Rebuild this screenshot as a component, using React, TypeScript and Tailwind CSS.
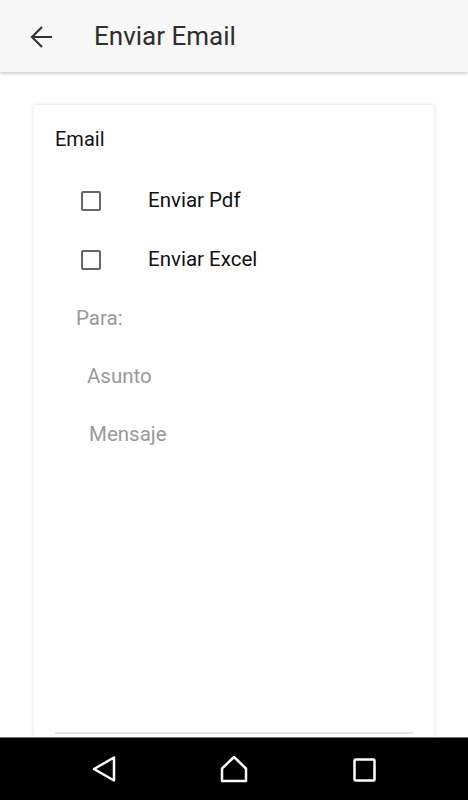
import React from "react"

function BackArrow() {
  return (
    <svg width="24" height="24" viewBox="0 0 24 24" className="text-[#333]">
      <path d="M22 12H3M12 2L2 12l10 10" fill="none" stroke="currentColor" strokeWidth="2.2" />
    </svg>
  )
}

function Check({ label }: { label: string }) {
  return (
    <div className="flex items-center h-[59px]">
      <div className="ml-[47px] w-[20px] h-[20px] border-2 border-[#666] rounded-[2px]" />
      <span className="ml-[47px] text-[20.5px] text-[#111]">{label}</span>
    </div>
  )
}

export default function App() {
  return (
    <div className="h-[800px] flex flex-col bg-white overflow-hidden" style={{ fontFamily: "Roboto, 'Noto Sans', sans-serif" }}>
      <header className="h-[72px] shrink-0 bg-[#f7f7f7] flex items-center shadow-[0_2px_3px_rgba(0,0,0,0.18)] relative z-10">
        <div className="ml-[30px] mt-[1px]">
          <BackArrow />
        </div>
        <h1 className="ml-[40px] text-[26px] font-normal text-[#2e2e2e]">Enviar Email</h1>
      </header>

      <main className="flex-1 min-h-0 pt-[33px] px-[34px]">
        <div className="h-full bg-white rounded-[2px] shadow-[0_0_4px_rgba(0,0,0,0.14)] flex flex-col">
          <div className="pl-[21px] pt-[21px] text-[20px] text-[#111] leading-[26px]">Email</div>
          <div className="mt-[19px]">
            <Check label="Enviar Pdf" />
            <Check label="Enviar Excel" />
          </div>
          <div className="text-[20.5px] text-[#999]">
            <div className="h-[58px] flex items-center pl-[42px]">Para:</div>
            <div className="h-[58px] flex items-center pl-[53px]">Asunto</div>
            <div className="h-[58px] flex items-center pl-[55px]">Mensaje</div>
          </div>
          <div className="flex-1" />
          <div className="mx-[21px] mb-[3px] h-[2px] bg-[#e3e3e3]" />
        </div>
      </main>

      <nav className="h-[63px] shrink-0 bg-black border-t border-[#777] flex items-center">
        <svg width="24" height="26" viewBox="0 0 24 26" className="ml-[92px]">
          <path d="M22 1.5L2 13l20 11.5z" fill="none" stroke="white" strokeWidth="2.5" strokeLinejoin="round" />
        </svg>
        <svg width="28" height="28" viewBox="0 0 28 28" className="ml-[104px]">
          <path d="M2 26V13.5L14 2l12 11.5V26z" fill="none" stroke="white" strokeWidth="2.5" strokeLinejoin="round" />
        </svg>
        <svg width="23" height="24" viewBox="0 0 23 24" className="ml-[105px] mt-[2px]">
          <rect x="1.5" y="1.5" width="20" height="21" rx="1" fill="none" stroke="white" strokeWidth="2.5" />
        </svg>
      </nav>
    </div>
  )
}
